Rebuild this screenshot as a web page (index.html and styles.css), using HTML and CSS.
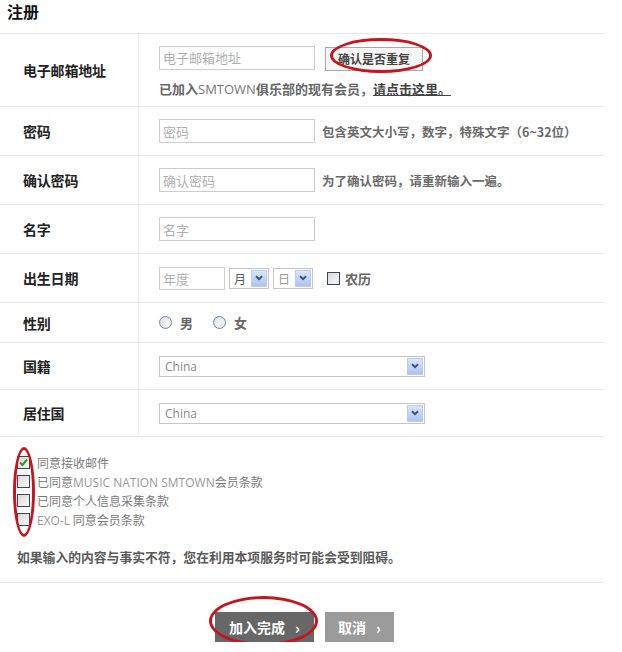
FILE: index.html
```html
<!DOCTYPE html>
<html lang="zh-CN">
<head>
<meta charset="utf-8">
<title>注册</title>
<link rel="stylesheet" href="styles.css">
</head>
<body>
<div class="page">
  <h1 class="title">注册</h1>

  <div class="form">
    <div class="row row-email">
      <div class="label">电子邮箱地址</div>
      <div class="field field-col">
        <div class="line">
          <input class="input w-long" type="text" placeholder="电子邮箱地址">
          <div class="dup-wrap">
            <button class="dup-btn" type="button">确认是否重复</button>
            <span class="mark mark-dup"></span>
          </div>
        </div>
        <p class="note">已加入<span class="latin">SMTOWN</span>俱乐部的现有会员，<a class="link" href="#">请点击这里。</a></p>
      </div>
    </div>

    <div class="row">
      <div class="label">密码</div>
      <div class="field">
        <input class="input w-long" type="password" placeholder="密码">
        <span class="hint">包含英文大小写，数字，特殊文字（6~32位）</span>
      </div>
    </div>

    <div class="row">
      <div class="label">确认密码</div>
      <div class="field">
        <input class="input w-long" type="password" placeholder="确认密码">
        <span class="hint">为了确认密码，请重新输入一遍。</span>
      </div>
    </div>

    <div class="row">
      <div class="label">名字</div>
      <div class="field">
        <input class="input w-long" type="text" placeholder="名字">
      </div>
    </div>

    <div class="row">
      <div class="label">出生日期</div>
      <div class="field field-date">
        <input class="input w-year" type="text" placeholder="年度">
        <div class="select sel-small">
          <span class="select-text dark">月</span>
          <span class="select-arrow"><svg width="8" height="6" viewBox="0 0 8 6"><path d="M1 1.2 L4 4.2 L7 1.2" fill="none" stroke="#3d5277" stroke-width="2"/></svg></span>
        </div>
        <div class="select sel-small">
          <span class="select-text">日</span>
          <span class="select-arrow"><svg width="8" height="6" viewBox="0 0 8 6"><path d="M1 1.2 L4 4.2 L7 1.2" fill="none" stroke="#3d5277" stroke-width="2"/></svg></span>
        </div>
        <label class="lunar"><span class="cb"></span><span class="lunar-text">农历</span></label>
      </div>
    </div>

    <div class="row row-gender">
      <div class="label">性别</div>
      <div class="field field-gender">
        <label class="opt"><span class="radio"></span><span class="opt-text">男</span></label>
        <label class="opt"><span class="radio"></span><span class="opt-text">女</span></label>
      </div>
    </div>

    <div class="row row-select">
      <div class="label">国籍</div>
      <div class="field">
        <div class="select sel-wide">
          <span class="select-text latin">China</span>
          <span class="select-arrow"><svg width="8" height="6" viewBox="0 0 8 6"><path d="M1 1.2 L4 4.2 L7 1.2" fill="none" stroke="#3d5277" stroke-width="2"/></svg></span>
        </div>
      </div>
    </div>

    <div class="row row-select">
      <div class="label">居住国</div>
      <div class="field">
        <div class="select sel-wide">
          <span class="select-text latin">China</span>
          <span class="select-arrow"><svg width="8" height="6" viewBox="0 0 8 6"><path d="M1 1.2 L4 4.2 L7 1.2" fill="none" stroke="#3d5277" stroke-width="2"/></svg></span>
        </div>
      </div>
    </div>
  </div>

  <div class="agree">
    <div class="agree-list">
      <label class="agree-item"><span class="cb cb-checked"><svg width="11" height="11" viewBox="0 0 11 11"><path d="M2 5.5 L4.5 8 L9 2.5" fill="none" stroke="#2c9a2c" stroke-width="2"/></svg></span><span>同意接收邮件</span></label>
      <label class="agree-item"><span class="cb"></span><span>已同意<span class="latin">MUSIC NATION SMTOWN</span>会员条款</span></label>
      <label class="agree-item"><span class="cb"></span><span>已同意个人信息采集条款</span></label>
      <label class="agree-item"><span class="cb"></span><span><span class="latin">EXO-L</span> 同意会员条款</span></label>
      <span class="mark mark-checks"></span>
    </div>
    <p class="warning">如果输入的内容与事实不符，您在利用本项服务时可能会受到阻碍。</p>
  </div>

  <div class="actions">
    <div class="submit-wrap">
      <button class="btn btn-dark" type="button"><span>加入完成</span><span class="chev">›</span></button>
      <span class="mark mark-submit"></span>
    </div>
    <button class="btn btn-light" type="button"><span>取消</span><span class="chev">›</span></button>
  </div>
</div>
</body>
</html>
```
FILE: styles.css
```css
* { box-sizing: border-box; }

body {
  margin: 0;
  background: #fff;
  font-family: "Noto Sans CJK SC", "Open Sans", sans-serif;
  color: #333;
}

.latin { font-family: "Open Sans", "Noto Sans CJK SC", sans-serif; }

.page { width: 622px; position: relative; }

.title {
  margin: 0;
  height: 33px;
  padding: 0 0 0 7px;
  font-size: 16px;
  line-height: 23px;
  font-weight: bold;
  color: #111;
}

.form {
  width: 604px;
  border-top: 1px solid #e8e8e8;
}

.row {
  display: grid;
  grid-template-columns: 139px 1fr;
  height: 49px;
  border-bottom: 1px solid #e8e8e8;
}
.row-email { height: 73px; }
.row-gender { height: 40px; }
.row-select { height: 47px; }

.label {
  display: flex;
  align-items: center;
  padding-left: 23px;
  border-right: 1px solid #f0f0f0;
  font-size: 14px;
  font-weight: bold;
  color: #222;
  letter-spacing: -0.2px;
}

.field {
  display: flex;
  align-items: center;
  gap: 7px;
  padding-left: 20px;
}

.field-col {
  flex-direction: column;
  align-items: flex-start;
  justify-content: flex-start;
  gap: 0;
  padding-top: 11px;
}

.line { display: flex; align-items: center; gap: 10px; }

.input {
  height: 24px;
  border: 1px solid #cdcdcd;
  padding: 0 3px;
  font-family: "Noto Sans CJK SC", sans-serif;
  font-size: 13px;
  color: #333;
  outline: none;
  background: #fff;
}
.input::placeholder { color: #b0b0b0; }
.w-long { width: 156px; }
.w-year { width: 66px; height: 23px; }

.dup-wrap { position: relative; }
.dup-btn {
  height: 24px;
  width: 98px;
  padding: 0;
  border: 1px solid #a8a8a8;
  background: #f6f6f6;
  font-family: "Noto Sans CJK SC", sans-serif;
  font-size: 12px;
  font-weight: bold;
  color: #444;
}

.note {
  margin: 9px 0 0;
  font-size: 13px;
  line-height: 17px;
  font-weight: bold;
  color: #666;
}
.note .latin { font-weight: normal; color: #777; }
.link { color: #444; text-decoration: underline; }

.hint {
  font-size: 12.5px;
  font-weight: bold;
  color: #6a6a6a;
}

.field-date { gap: 4px; }

.select {
  display: flex;
  align-items: stretch;
  height: 21px;
  border: 1px solid #c6c6c6;
  background: #fff;
}
.select-text {
  flex: 1;
  padding-left: 4px;
  font-size: 12px;
  line-height: 19px;
  color: #999;
}
.select-text.dark { color: #555; }
.select-text.latin { color: #8a8a8a; padding-left: 5px; }
.select-arrow {
  width: 16px;
  margin: 1px;
  border: 1px solid #b9cbee;
  background: linear-gradient(#dbe5fb, #aec3ef);
  display: flex;
  align-items: center;
  justify-content: center;
}
.sel-small { width: 40px; }
.sel-wide { width: 266px; }

.lunar {
  display: flex;
  align-items: center;
  gap: 5px;
  margin-left: 10px;
}
.lunar-text { font-size: 13px; font-weight: bold; color: #666; }

.cb {
  width: 13px;
  height: 13px;
  border: 1px solid #34465a;
  background: linear-gradient(135deg, #d8d8d8, #fafafa);
  display: inline-flex;
  align-items: center;
  justify-content: center;
}

.field-gender { gap: 20px; }
.opt { display: flex; align-items: center; gap: 8px; }
.radio {
  width: 13px;
  height: 13px;
  border-radius: 50%;
  border: 1px solid #74879a;
  background: radial-gradient(circle at 60% 60%, #f8f8f8, #d6dbe0);
}
.opt-text { font-size: 13px; font-weight: bold; color: #666; }

.agree {
  width: 604px;
  padding: 16px 0 17px 17px;
  border-bottom: 1px solid #ececec;
}
.agree-list { position: relative; }
.agree-item {
  display: flex;
  align-items: center;
  gap: 7px;
  height: 19px;
  font-size: 12px;
  color: #7a7a7a;
}
.agree-item .latin { color: #999; }

.warning {
  margin: 19px 0 0;
  font-size: 12.8px;
  line-height: 17px;
  font-weight: bold;
  color: #5a5a5a;
}

.actions {
  width: 604px;
  display: flex;
  justify-content: center;
  gap: 11px;
  padding: 29px 0 0 5px;
}
.submit-wrap { position: relative; }
.btn {
  height: 30px;
  border: 0;
  display: flex;
  align-items: center;
  justify-content: center;
  gap: 10px;
  font-family: "Noto Sans CJK SC", sans-serif;
  font-size: 14px;
  font-weight: bold;
  color: #fff;
}
.btn-dark { width: 99px; background: #676767; }
.btn-light { width: 69px; background: #9b9b9b; }
.chev { font-size: 15px; }

.mark {
  position: absolute;
  border: 3px solid #c4161c;
  border-radius: 50%;
  pointer-events: none;
}
.mark-dup { left: 5px; top: -7px; width: 102px; height: 35px; }
.mark-checks { left: -4px; top: -6px; width: 22px; height: 90px; }
.mark-submit { left: -6px; top: -16px; width: 109px; height: 50px; }
```
